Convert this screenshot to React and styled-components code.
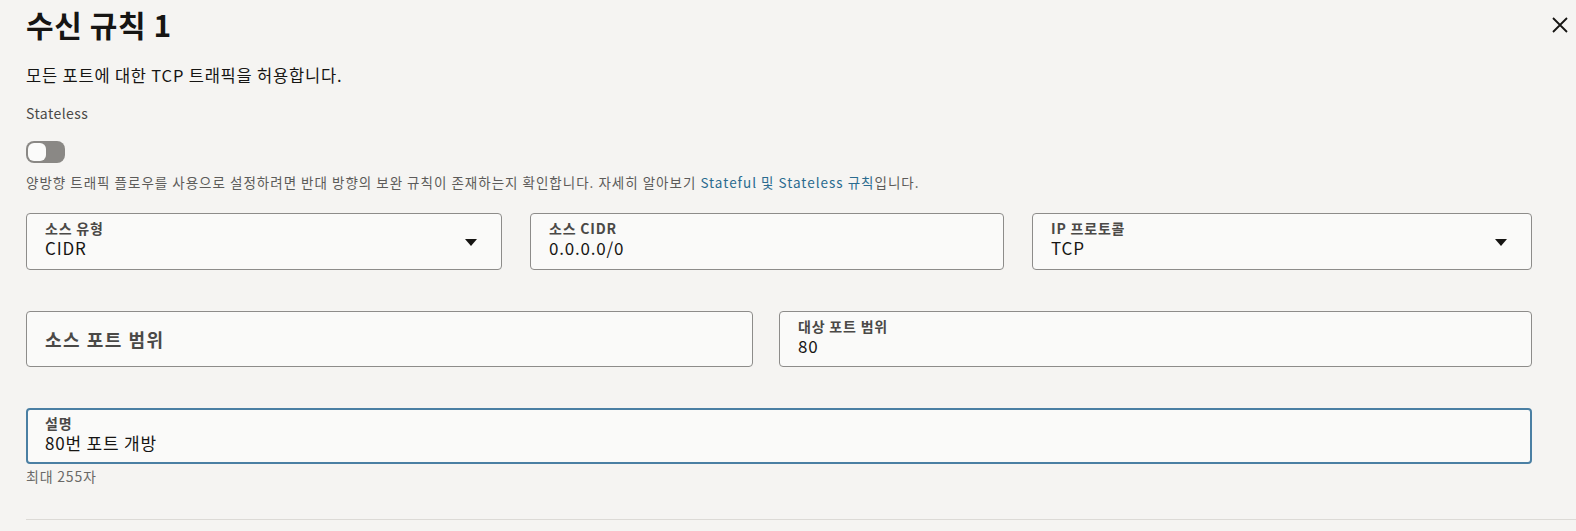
import React from 'react';
import styled, { createGlobalStyle } from 'styled-components';

const GlobalStyle = createGlobalStyle`
  html, body {
    margin: 0;
    padding: 0;
    background: #f5f4f2;
  }
  body {
    font-family: "Noto Sans CJK KR", "Noto Sans", sans-serif;
    color: #161513;
  }
`;

const Page = styled.div`
  padding-left: 26px;
  height: 531px;
  overflow: hidden;
`;

const Header = styled.div`
  display: flex;
  justify-content: space-between;
  align-items: flex-start;
  padding-right: 8px;
  margin-top: 6px;
`;

const Title = styled.h1`
  margin: 0;
  font-size: 30px;
  line-height: 36px;
  font-weight: 700;
  letter-spacing: 0.6px;
  color: #161513;
`;

const CloseButton = styled.button`
  border: none;
  background: none;
  padding: 0;
  margin-top: 11px;
  width: 16px;
  height: 16px;
  display: flex;
  cursor: pointer;
`;

const Form = styled.div`
  padding-right: 44px;
`;

const Lead = styled.p`
  margin: 23px 0 0;
  font-size: 16.5px;
  line-height: 20px;
  letter-spacing: 0.8px;
  color: #161513;
`;

const SmallLabel = styled.div`
  margin-top: 19px;
  font-size: 14px;
  line-height: 18px;
  letter-spacing: 0.45px;
  color: #4a4947;
`;

const Track = styled.div`
  margin-top: 19px;
  width: 39px;
  height: 22px;
  border-radius: 8px;
  background: #8a8885;
  display: flex;
  align-items: center;
  padding: 0 2px;
  box-sizing: border-box;
`;

const Knob = styled.div`
  width: 18px;
  height: 18px;
  border-radius: 6px;
  background: #fbfbfa;
`;

const Help = styled.p`
  margin: 10px 0 0;
  font-size: 13.5px;
  line-height: 18px;
  letter-spacing: 1px;
  color: #5c5b59;
`;

const Link = styled.a`
  color: #2a6b8f;
  text-decoration: none;
`;

const Row = styled.div`
  display: grid;
  grid-template-columns: ${p => p.$cols};
  column-gap: ${p => p.$gap}px;
  margin-top: ${p => p.$top}px;
`;

const Field = styled.div`
  position: relative;
  height: ${p => p.$h}px;
  box-sizing: border-box;
  background: #fafaf9;
  border: ${p => (p.$focus ? '2px solid #4a7fa3' : '1px solid #8d8c8a')};
  border-radius: 4px;
  padding: ${p => (p.$focus ? '5px 17px' : '6px 18px')};
  display: flex;
  flex-direction: column;
  justify-content: ${p => (p.$empty ? 'center' : 'flex-start')};
`;

const FieldLabel = styled.div`
  font-size: ${p => (p.$big ? '18px' : '14px')};
  line-height: ${p => (p.$big ? '22px' : '17px')};
  letter-spacing: ${p => (p.$big ? '1.5px' : '0.8px')};
  font-weight: 700;
  color: #4a4947;
`;

const FieldValue = styled.div`
  font-size: 17px;
  line-height: 22px;
  letter-spacing: 0.8px;
  color: #161513;
`;

const Caret = styled.span`
  position: absolute;
  right: 24px;
  top: 50%;
  margin-top: -3px;
  width: 0;
  height: 0;
  border-left: 6px solid transparent;
  border-right: 6px solid transparent;
  border-top: 7px solid #161513;
`;

const Hint = styled.div`
  margin-top: 4px;
  font-size: 14px;
  line-height: 16px;
  letter-spacing: 0.8px;
  color: #6a6967;
`;

const Divider = styled.hr`
  margin: 35px 0 0;
  border: none;
  border-top: 1px solid #dcdad6;
`;

const InputField = ({ label, value, select, h = 57, focus }) => (
  <Field $h={h} $focus={focus} $empty={!value}>
    <FieldLabel $big={!value}>{label}</FieldLabel>
    {value && <FieldValue>{value}</FieldValue>}
    {select && <Caret />}
  </Field>
);

export default function App() {
  return (
    <>
      <GlobalStyle />
      <Page>
        <Header>
          <Title>수신 규칙 1</Title>
          <CloseButton aria-label="닫기">
            <svg width="16" height="16" viewBox="0 0 16 16">
              <path d="M1 1 L15 15 M15 1 L1 15" stroke="#161513" strokeWidth="1.8" />
            </svg>
          </CloseButton>
        </Header>
        <Form>
          <Lead>모든 포트에 대한 TCP 트래픽을 허용합니다.</Lead>
          <SmallLabel>Stateless</SmallLabel>
          <Track>
            <Knob />
          </Track>
          <Help>
            양방향 트래픽 플로우를 사용으로 설정하려면 반대 방향의 보완 규칙이 존재하는지 확인합니다. 자세히 알아보기{' '}
            <Link href="#">Stateful 및 Stateless 규칙</Link>입니다.
          </Help>
          <Row $cols="476fr 474fr 500fr" $gap={28} $top={22}>
            <InputField label="소스 유형" value="CIDR" select />
            <InputField label="소스 CIDR" value="0.0.0.0/0" />
            <InputField label="IP 프로토콜" value="TCP" select />
          </Row>
          <Row $cols="727fr 753fr" $gap={26} $top={41}>
            <InputField label="소스 포트 범위" h={56} />
            <InputField label="대상 포트 범위" value="80" h={56} />
          </Row>
          <Row $cols="1fr" $gap={0} $top={41}>
            <InputField label="설명" value="80번 포트 개방" h={56} focus />
          </Row>
          <Hint>최대 255자</Hint>
        </Form>
        <Divider />
      </Page>
    </>
  );
}
